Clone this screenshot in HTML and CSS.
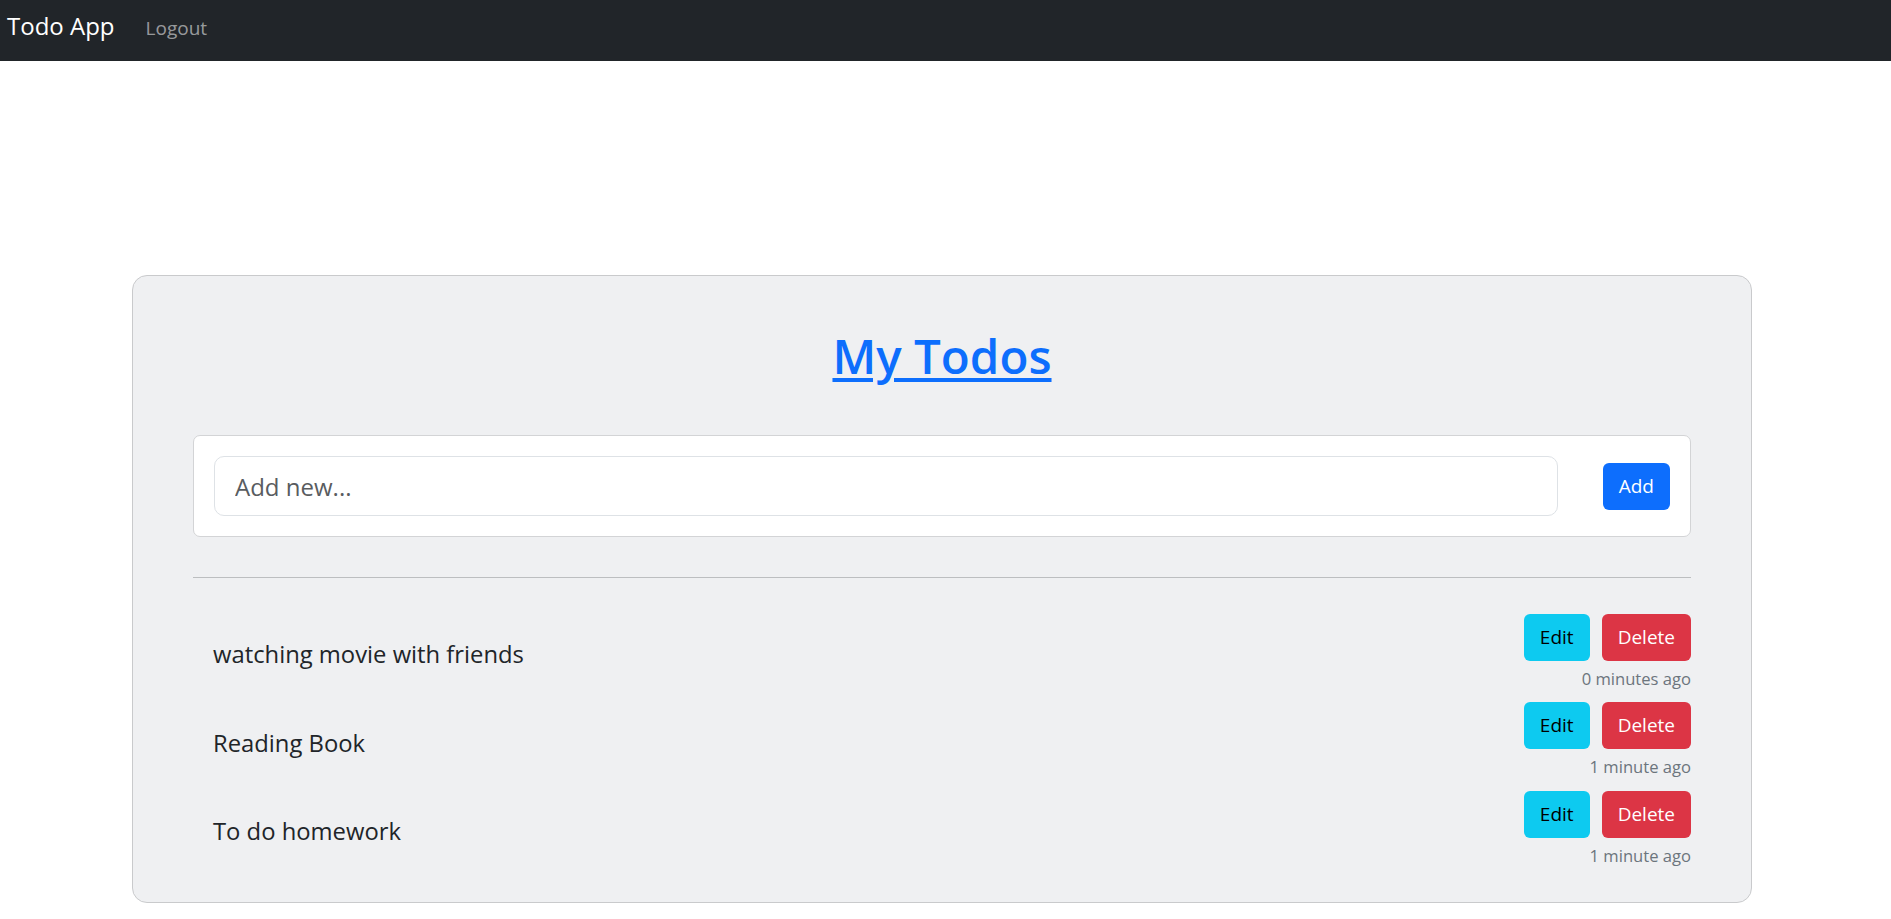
FILE: index.html
```html
<!DOCTYPE html>
<html lang="en">
<head>
<meta charset="utf-8">
<title>Todo App</title>
<link rel="stylesheet" href="styles.css">
</head>
<body>
<nav class="navbar">
  <a class="brand" href="#">Todo App</a>
  <a class="nav-link" href="#">Logout</a>
</nav>
<main class="container">
  <section class="todo-card">
    <h1 class="title"><a href="#">My Todos</a></h1>
    <form class="add-box">
      <input class="add-input" type="text" placeholder="Add new...">
      <button class="btn btn-primary" type="button">Add</button>
    </form>
    <hr class="divider">
    <ul class="todo-list">
      <li class="todo-row">
        <span class="todo-text">watching movie with friends</span>
        <div class="todo-side">
          <div class="todo-actions">
            <button class="btn btn-info" type="button">Edit</button>
            <button class="btn btn-danger" type="button">Delete</button>
          </div>
          <small class="todo-time">0 minutes ago</small>
        </div>
      </li>
      <li class="todo-row">
        <span class="todo-text">Reading Book</span>
        <div class="todo-side">
          <div class="todo-actions">
            <button class="btn btn-info" type="button">Edit</button>
            <button class="btn btn-danger" type="button">Delete</button>
          </div>
          <small class="todo-time">1 minute ago</small>
        </div>
      </li>
      <li class="todo-row">
        <span class="todo-text">To do homework</span>
        <div class="todo-side">
          <div class="todo-actions">
            <button class="btn btn-info" type="button">Edit</button>
            <button class="btn btn-danger" type="button">Delete</button>
          </div>
          <small class="todo-time">1 minute ago</small>
        </div>
      </li>
    </ul>
  </section>
</main>
</body>
</html>
```
FILE: styles.css
```css
* { box-sizing: border-box; }

body {
  margin: 0;
  font-family: "Open Sans", "Noto Sans", sans-serif;
  font-size: 19px;
  line-height: 1.5;
  color: #212529;
  background: #fff;
}

.navbar {
  height: 61px;
  background: #212529;
  display: flex;
  align-items: baseline;
  padding: 7px 0 0 7px;
}

.brand {
  font-size: 24px;
  line-height: 37.5px;
  color: #fff;
  text-decoration: none;
  margin-right: 31px;
}

.nav-link {
  font-size: 19px;
  color: rgba(255, 255, 255, 0.55);
  text-decoration: none;
}

.container {
  width: 1620px;
  margin: 214px 0 0 132px;
}

.todo-card {
  background: #eff0f2;
  border: 1px solid #c9cacc;
  border-radius: 15px;
  padding: 49px 60px 33px;
}

.title {
  margin: 0;
  text-align: center;
  font-size: 47.5px;
  line-height: 62px;
  font-weight: 600;
}

.title a {
  color: #0d6efd;
  text-decoration: underline;
  text-decoration-thickness: 4px;
  text-underline-offset: 4px;
}

.add-box {
  margin: 48px 0 0;
  background: #fff;
  border: 1px solid #d3d4d6;
  border-radius: 7px;
  padding: 20px;
  display: flex;
  align-items: center;
  gap: 45px;
}

.add-input {
  flex: 1;
  height: 60px;
  border: 1px solid #dee2e6;
  border-radius: 10px;
  padding: 0 20px;
  font-family: inherit;
  font-size: 24px;
  color: #212529;
  background: #fff;
  outline: none;
}

.add-input::placeholder {
  color: #595c5f;
}

.btn {
  height: 47px;
  padding: 0 15px;
  border: 1px solid transparent;
  border-radius: 6px;
  font-family: inherit;
  font-size: 19px;
  line-height: 1;
  cursor: pointer;
}

.btn-primary { background: #0d6efd; color: #fff; }
.btn-info { background: #0dcaf0; color: #000; }
.btn-danger { background: #dc3545; color: #fff; }

.divider {
  margin: 40px 0 0;
  border: 0;
  border-top: 1px solid #bcbec0;
}

.todo-list {
  list-style: none;
  margin: 36px 0 0;
  padding: 0;
  display: flex;
  flex-direction: column;
  gap: 10px;
}

.todo-row {
  display: flex;
  align-items: center;
  justify-content: space-between;
  padding-left: 20px;
}

.todo-text {
  font-size: 23.8px;
  line-height: 37.5px;
  padding-top: 4px;
}

.todo-side {
  display: flex;
  flex-direction: column;
  align-items: flex-end;
}

.todo-actions {
  display: flex;
  gap: 12px;
}

.todo-time {
  margin-top: 5px;
  font-size: 16.6px;
  line-height: 26.25px;
  color: #6c757d;
}
```
